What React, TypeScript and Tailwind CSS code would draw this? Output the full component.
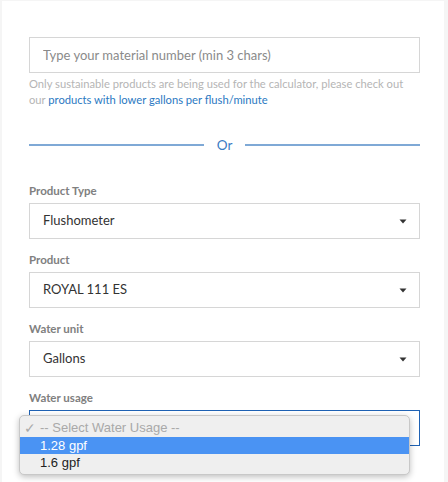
import { useState } from "react";

const font = { fontFamily: "Lato, 'Open Sans', sans-serif" };

function Caret() {
  return (
    <svg width="8" height="5" viewBox="0 0 8 5" className="shrink-0">
      <path d="M0.5 0.5 L7.5 0.5 L4 4.5 Z" fill="#333" />
    </svg>
  );
}

function SelectField({
  label,
  value,
  active = false,
}: {
  label: string;
  value: string;
  active?: boolean;
}) {
  return (
    <div className="flex flex-col">
      <label className="h-4 text-[11.5px] leading-4 font-bold text-[#808080]">{label}</label>
      <div
        className={`mt-1 flex h-9 items-center justify-between border pl-[13px] pr-[12px] ${
          active ? "border-[#1f62b4]" : "border-[#d6d6d6]"
        }`}
      >
        <span className="text-[13px] text-[#333]">{value}</span>
        <Caret />
      </div>
    </div>
  );
}

export default function App() {
  const [usage] = useState("1.28 gpf");
  const options = ["1.28 gpf", "1.6 gpf"];

  return (
    <div className="h-[482px] w-[448px] overflow-hidden bg-[#f5f5f5] pl-[2px] pr-[4px] pt-[1px]" style={font}>
      <div className="relative h-full bg-white pl-[27px] pr-[24px] pt-[36px]">
        <input
          type="text"
          placeholder="Type your material number (min 3 chars)"
          className="h-9 w-full border border-[#d6d6d6] px-[13px] text-[13px] text-[#333] outline-none placeholder:text-[#8a8a8a]"
        />
        <p className="mt-[3px] text-[11.2px] leading-4 text-[#b5b5b5]">
          Only sustainable products are being used for the calculator, please check out our{" "}
          <a href="#" className="text-[#2b79c2]">
            products with lower gallons per flush/minute
          </a>
        </p>

        <div className="mt-[29px] flex items-center gap-[13px]">
          <div className="h-[2px] flex-1 bg-[#7fa9d6]" />
          <span className="text-[13.5px] leading-4 text-[#3b7cc4]">Or</span>
          <div className="h-[2px] flex-1 bg-[#7fa9d6]" />
        </div>

        <div className="mt-[30px] flex flex-col gap-[13px]">
          <SelectField label="Product Type" value="Flushometer" />
          <SelectField label="Product" value="ROYAL 111 ES" />
          <SelectField label="Water unit" value="Gallons" />
          <SelectField label="Water usage" value="" active />
        </div>

        <div
          className="absolute left-[17px] top-[414px] w-[391px] rounded-[5px] border border-[#c8c8c8] bg-[#efefef] py-[3px] shadow-[0_2px_6px_rgba(0,0,0,0.25)]"
          style={{ fontFamily: "'Liberation Sans', Arial, sans-serif" }}
        >
          <div className="flex h-[18px] items-center text-[13px] text-[#a9a9a9]">
            <span className="w-[20px] pl-[4px] text-[14px]">✓</span>
            <span>-- Select Water Usage --</span>
          </div>
          {options.map((o) => (
            <div
              key={o}
              className={`flex h-[17px] items-center pl-[20px] text-[13px] ${
                o === usage ? "bg-[#4a93f3] text-white" : "text-[#222]"
              }`}
            >
              {o}
            </div>
          ))}
        </div>
      </div>
    </div>
  );
}
